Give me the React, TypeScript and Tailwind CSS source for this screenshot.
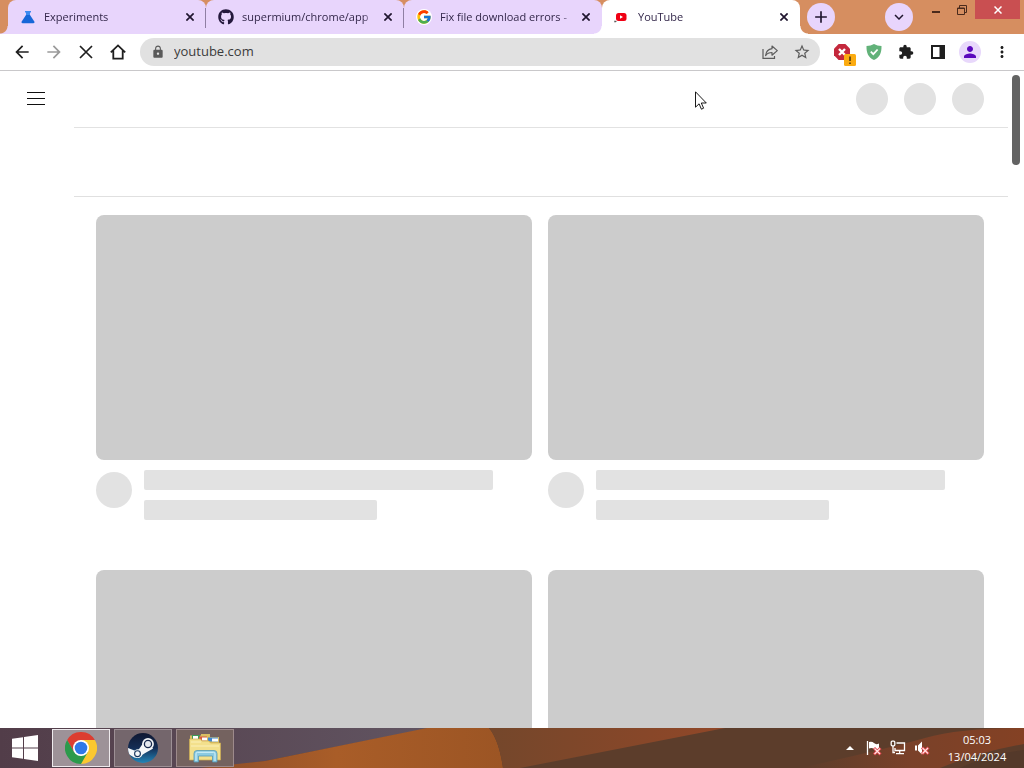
import type { ReactNode } from "react";
import {
  MdArrowBack,
  MdArrowForward,
  MdExtension,
  MdLock,
  MdMoreVert,
  MdPerson,
  MdStarBorder,
  MdKeyboardArrowDown,
  MdAdd,
} from "react-icons/md";
import { FaGithub } from "react-icons/fa";
import { FcGoogle } from "react-icons/fc";

function FlaskIcon() {
  return (
    <svg viewBox="0 0 16 16" className="size-4">
      <path d="M5 2h6v1.600h-1V6h-4V3.600H5z" fill="#3c8af0" />
      <path d="M6 6h4l4.300 6.600c.5.800 0 1.700-.9 1.700H2.600c-.9 0-1.400-.9-.9-1.700z" fill="#1767d8" />
    </svg>
  );
}

function YouTubeIcon() {
  return (
    <svg viewBox="0 0 16 16" className="size-4">
      <rect x="2" y="4" width="10.500" height="8" rx="2.500" fill="#f00014" />
      <path d="M6 6.300v3.400L9 8z" fill="#fff" />
      <path d="M1 11.500v2M.5 12.500h2" stroke="#444" strokeWidth=".8" />
    </svg>
  );
}

type TabProps = { icon: ReactNode; title: string; active?: boolean; divider?: boolean };

function Tab({ icon, title, active, divider }: TabProps) {
  return (
    <div
      className={
        active
          ? "relative flex h-full min-w-0 max-w-[198px] flex-1 items-center rounded-t-lg bg-white pr-2 pl-3"
          : "relative flex h-full min-w-0 max-w-[198px] flex-1 items-center rounded-t-lg bg-[#e8d5fc] pr-2 pl-3"
      }
    >
      {active && (
        <>
          <span className="absolute bottom-0 -left-2 size-2 bg-[radial-gradient(circle_at_0_0,transparent_7px,#fff_8px)]" />
          <span className="absolute -right-2 bottom-0 size-2 bg-[radial-gradient(circle_at_100%_0,transparent_7px,#fff_8px)]" />
        </>
      )}
      <span className="flex size-4 shrink-0 items-center justify-center">{icon}</span>
      <span className="ml-2 min-w-0 flex-1 overflow-hidden text-[11px] whitespace-nowrap text-[#33274a] [mask-image:linear-gradient(to_right,#000_90%,transparent)]">
        {title}
      </span>
      <button aria-label={`Close ${title}`} className="ml-1 flex size-4 items-center justify-center text-[#20162f]">
        <svg viewBox="0 0 8 8" className="size-2" stroke="currentColor" strokeWidth="1.700">
          <path d="M.4.400l7.200 7.200M7.600.400L.4 7.600" />
        </svg>
      </button>
      {divider && <span className="absolute top-2 right-0 h-5 w-px bg-[#8f7fa3]" />}
    </div>
  );
}

function TabStrip() {
  return (
    <header className="relative flex h-[34px] shrink-0 bg-[#d68e60] pl-2">
      <span className="absolute bottom-0 left-0 size-2 bg-[radial-gradient(circle_at_0_0,transparent_7px,#e8d5fc_8px)]" />
      <div className="flex min-w-0 flex-1">
        <Tab icon={<FlaskIcon />} title="Experiments" divider />
        <Tab icon={<FaGithub className="size-4 text-[#24183c]" />} title="supermium/chrome/app" divider />
        <Tab
          icon={
            <span className="flex size-4 items-center justify-center rounded-full bg-white">
              <FcGoogle className="size-4" />
            </span>
          }
          title="Fix file download errors -"
        />
        <Tab icon={<YouTubeIcon />} title="YouTube" active />
        <button
          aria-label="New tab"
          className="mt-[3px] ml-[7px] flex size-7 shrink-0 items-center justify-center rounded-full bg-[#e8d5fc] text-[#20162f]"
        >
          <MdAdd className="size-5" />
        </button>
      </div>
      <button
        aria-label="Search tabs"
        className="mt-[3px] flex size-7 shrink-0 items-center justify-center rounded-full bg-[#e8d5fc] text-[#20162f]"
      >
        <MdKeyboardArrowDown className="size-[18px]" />
      </button>
      <div className="flex h-[19px] shrink-0 pr-1 pl-[10px]">
        <button aria-label="Minimise" className="flex w-[26px] items-end justify-center pb-[6px]">
          <span className="h-[2px] w-2 bg-[#4a2a1c]" />
        </button>
        <button aria-label="Restore" className="flex w-[26px] items-center justify-center">
          <svg viewBox="0 0 10 10" className="size-[10px]" fill="none" stroke="#4a2a1c">
            <path d="M.5 3h7v6.500h-7zM.5 3.500h7M2.500 3V.5h7v7h-2" />
          </svg>
        </button>
        <button aria-label="Close" className="flex w-[45px] items-center justify-center bg-[#c94f51]">
          <svg viewBox="0 0 8 8" className="size-2" stroke="#fff" strokeWidth="1.500">
            <path d="M.5.500l7 7M7.500.500l-7 7" />
          </svg>
        </button>
      </div>
    </header>
  );
}

function Toolbar() {
  const iconButton = "flex size-8 shrink-0 items-center justify-center text-[#1f1f1f]";
  return (
    <div className="flex h-[37px] shrink-0 items-center border-b border-[#c9c8ca] bg-white pr-[6px] pl-[6px]">
      <button aria-label="Back" className={iconButton}>
        <MdArrowBack className="size-5" />
      </button>
      <button aria-label="Forward" className={iconButton}>
        <MdArrowForward className="size-5 text-[#9a9a9a]" />
      </button>
      <button aria-label="Stop loading" className={iconButton}>
        <svg viewBox="0 0 14 14" className="size-[14px]" stroke="currentColor" strokeWidth="1.700">
          <path d="M1 1l12 12M13 1L1 13" />
        </svg>
      </button>
      <button aria-label="Home" className={iconButton}>
        <svg viewBox="0 0 16 16" className="size-4" fill="none" stroke="currentColor" strokeWidth="1.800">
          <path d="M.8 8.300L8 1.400l7.200 6.900M3.300 6.500v8.200h9.400V6.500" />
        </svg>
      </button>
      <div className="mr-[6px] ml-[6px] flex h-7 min-w-0 flex-1 items-center rounded-full bg-[#e1e1e1] pr-[2px] pl-[11px]">
        <MdLock className="size-[14px] shrink-0 text-[#5a5a5a]" />
        <input
          aria-label="Address and search bar"
          defaultValue="youtube.com"
          className="ml-[9px] min-w-0 flex-1 bg-transparent text-[13px] text-[#3b3b3b] outline-none"
        />
        <button aria-label="Share this page" className={iconButton}>
          <svg viewBox="0 0 16 16" className="size-4" fill="none" stroke="#5c5c5c" strokeWidth="1.200">
            <path d="M1 5v9.400h11.500V12" />
            <path d="M10 2l5.300 4.600L10 11.200V8.500C7 8.500 5 9.500 3.600 11.600 4 8 6 5.200 10 4.700z" strokeLinejoin="round" />
          </svg>
        </button>
        <button aria-label="Bookmark this tab" className={iconButton}>
          <MdStarBorder className="size-[18px] text-[#5c5c5c]" />
        </button>
      </div>
      <button aria-label="Content blocker" className={iconButton}>
        <svg viewBox="0 0 24 24" className="size-6 overflow-visible">
          <path d="M8.600 4h6.800L20 8.700v6.600L15.400 20H8.600L4 15.300V8.700z" fill="#c4283c" />
          <path d="M9 9l6 6M15 9l-6 6" stroke="#fff" strokeWidth="2.400" />
          <rect x="14" y="14" width="12" height="12" rx="1.500" fill="#fbab10" />
          <path d="M20 16.500v4.500M20 22.500v1.500" stroke="#3b2a08" strokeWidth="1.400" />
        </svg>
      </button>
      <button aria-label="Protection" className={iconButton}>
        <svg viewBox="0 0 16 16" className="size-4">
          <path d="M8 0c2.200 1.300 4.600 1.900 7.500 1.900C15.700 8.600 13.700 13.500 8 16 2.300 13.500.3 8.600.5 1.900 3.400 1.900 5.800 1.300 8 0z" fill="#62b279" />
          <path d="M4.800 7.600l2.500 2.500 4.300-4.600" fill="none" stroke="#fff" strokeWidth="1.800" />
        </svg>
      </button>
      <button aria-label="Extensions" className={iconButton}>
        <MdExtension className="size-4" />
      </button>
      <button aria-label="Side panel" className={iconButton}>
        <svg viewBox="0 0 14 14" className="size-[14px]">
          <path d="M0 0h14v14H0zM2 2v10h6.500V2z" fill="#1f1f1f" fillRule="evenodd" />
        </svg>
      </button>
      <button aria-label="Profile" className={iconButton}>
        <span className="flex size-[22px] items-center justify-center rounded-full bg-[#e8d8fb]">
          <MdPerson className="size-[18px] text-[#5a08bd]" />
        </span>
      </button>
      <button aria-label="Menu" className={iconButton}>
        <MdMoreVert className="size-[18px]" />
      </button>
    </div>
  );
}

function SkeletonCard() {
  return (
    <article className="mb-[50px]">
      <div className="aspect-video rounded-lg bg-[#cccccc]" />
      <div className="mt-[10px] flex gap-3">
        <div className="mt-[2px] size-9 shrink-0 rounded-full bg-[#e2e2e2]" />
        <div className="flex flex-1 flex-col gap-[10px]">
          <div className="h-5 w-[90%] rounded-xs bg-[#e2e2e2]" />
          <div className="h-5 w-3/5 rounded-xs bg-[#e2e2e2]" />
        </div>
      </div>
    </article>
  );
}

function Page() {
  return (
    <main className="flex min-h-0 flex-1 overflow-hidden bg-white">
      <div className="flex w-[74px] shrink-0 items-start pt-[21px] pl-[27px]">
        <button aria-label="Guide">
          <svg viewBox="0 0 18 13" className="h-[13px] w-[18px]" stroke="#0f0f0f">
            <path d="M0 .5h18M0 6.500h18M0 12.500h18" />
          </svg>
        </button>
      </div>
      <div className="min-w-0 flex-1">
        <div className="flex h-[57px] items-center justify-end gap-4 border-b border-[#e2e2e2] pr-6">
          <span className="size-8 rounded-full bg-[#e2e2e2]" />
          <span className="size-8 rounded-full bg-[#e2e2e2]" />
          <span className="size-8 rounded-full bg-[#e2e2e2]" />
        </div>
        <div className="h-[69px] border-b border-[#e0e0e0]" />
        <div className="grid grid-cols-2 gap-x-4 pt-[18px] pr-6 pl-[22px]">
          <SkeletonCard />
          <SkeletonCard />
          <SkeletonCard />
          <SkeletonCard />
        </div>
      </div>
      <div className="flex w-4 shrink-0 justify-center pt-1">
        <span className="h-[90px] w-2 rounded-full bg-[#636363]" />
      </div>
    </main>
  );
}

function ChromeLogo() {
  return (
    <svg viewBox="0 0 32 32" className="size-8">
      <path d="M16 16L29.860 8A16 16 0 0 1 16 32z" fill="#fbc830" />
      <path d="M16 8h13.860L23 20z" fill="#fbc830" />
      <path d="M16 8h13.860A16 16 0 0 0 2.140 8L9 20z" fill="#dc3d31" />
      <path d="M9 20l7 4 6.900-4L16 32A16 16 0 0 1 2.140 8z" fill="#2b9a4b" />
      <circle cx="16" cy="16" r="8" fill="#fff" />
      <circle cx="16" cy="16" r="6.300" fill="#2f78e8" />
    </svg>
  );
}

function SteamLogo() {
  return (
    <svg viewBox="0 0 32 32" className="size-8">
      <defs>
        <linearGradient id="steam" x1="0" y1="0" x2="0" y2="1">
          <stop offset="0" stopColor="#101832" />
          <stop offset=".5" stopColor="#142d55" />
          <stop offset="1" stopColor="#2286b8" />
        </linearGradient>
        <clipPath id="steam-disc">
          <circle cx="16" cy="16" r="15" />
        </clipPath>
      </defs>
      <circle cx="16" cy="16" r="15" fill="url(#steam)" />
      <g clipPath="url(#steam-disc)">
        <path d="M0 15.500l8 3.200 3-.2 4.200-6 .5 -1.500 10.500 5.500-8 4.500-4 2.500-3 2.500-4-.500L0 21z" fill="#f4f6f8" />
      </g>
      <circle cx="11" cy="21.700" r="4.400" fill="#f4f6f8" />
      <circle cx="10.500" cy="21.700" r="2.900" fill="none" stroke="#16345c" strokeWidth="1.100" />
      <circle cx="21" cy="12" r="5.900" fill="#f4f6f8" />
      <circle cx="21" cy="12" r="3.600" fill="#e5e9ef" stroke="#17294d" strokeWidth="1.300" />
    </svg>
  );
}

function ExplorerLogo() {
  return (
    <svg viewBox="0 0 34 32" className="h-8 w-[34px]">
      <path d="M2 6V3.500h11V2h9v3h9v22H2z" fill="#d9bf62" />
      <path d="M4 3h8v4H4z" fill="#3f9b58" />
      <path d="M11 4.500h8v4h-8z" fill="#d65b3f" />
      <path d="M20 5.500h10v4H20z" fill="#4087d0" />
      <path d="M5 4h5v3H5zM14 5.500h5v3h-5zM24 6.500h6v3h-6z" fill="#fff" />
      <path d="M1.500 7h11l1.500 2h7l1.500 2h10v17h-31z" fill="#f3e08c" stroke="#cfae50" strokeWidth=".7" />
      <path d="M3 10h10M3 14h28" stroke="#fbf0b8" />
      <path d="M6 30v-8.500q0-3 3-3h17q3 0 3 3V30h-4.500v-6h-14v6z" fill="#8ccbe2" stroke="#5799b5" strokeWidth=".8" />
      <path d="M8 29v-7.200q0-1.500 1.500-1.500h16q1.500 0 1.500 1.500V29" fill="none" stroke="#d5f2fb" />
    </svg>
  );
}

function Taskbar() {
  const app = "flex h-[38px] w-[58px] items-center justify-center border";
  return (
    <footer className="relative h-10 shrink-0 overflow-hidden bg-[#5c3d2b]">
      <svg viewBox="0 0 1024 40" preserveAspectRatio="none" className="absolute inset-0 size-full" aria-hidden="true">
        <defs>
          <linearGradient id="sand" x1="0" x2="1">
            <stop offset="0" stopColor="#8c4e2a" />
            <stop offset=".45" stopColor="#a95d28" />
            <stop offset="1" stopColor="#9c5524" />
          </linearGradient>
          <linearGradient id="ridge" x1="0" x2="1">
            <stop offset="0" stopColor="#74472b" />
            <stop offset="1" stopColor="#914728" />
          </linearGradient>
          <linearGradient id="dusk" x1="0" x2="1">
            <stop offset="0" stopColor="#523d49" />
            <stop offset="1" stopColor="#615461" />
          </linearGradient>
          <linearGradient id="glow" x1="0" x2="1">
            <stop offset="0" stopColor="#5c3d2b" />
            <stop offset=".5" stopColor="#7a4129" />
            <stop offset="1" stopColor="#844124" />
          </linearGradient>
        </defs>
        <path d="M0 0h1024v40H0z" fill="#5c3d2b" />
        <path d="M0 0h430L265 33 210 40H0z" fill="url(#dusk)" />
        <path d="M427 0h62q10 12 14 40H200l65-7z" fill="url(#sand)" />
        <path d="M489 0h236L520 40h-17Q499 12 489 0z" fill="url(#ridge)" />
        <path d="M800 40Q890 20 925 10t99-10v16q-45 8-84 24z" fill="url(#glow)" />
        <path d="M960 40q30-14 64-18v18z" fill="#54392a" />
      </svg>
      <div className="relative flex h-full items-center">
        <button aria-label="Start" className="flex w-[52px] shrink-0 items-center justify-center pr-[2px]">
          <svg viewBox="0 0 26 26" className="size-[26px]" fill="#fff">
            <path d="M0 3.700l11-1.500v10.200H0zM12 2l14-2v12.400H12zM0 13.500h11v10.200L0 22.200zM12 13.500h14V26l-14-2z" />
          </svg>
        </button>
        <div className="flex shrink-0 gap-1">
          <button aria-label="Google Chrome" className={`${app} border-[#eeeaed] bg-[#9d9298]`}>
            <ChromeLogo />
          </button>
          <button aria-label="Steam" className={`${app} border-[#9d9095] bg-[#74666c]`}>
            <SteamLogo />
          </button>
          <button aria-label="File Explorer" className={`${app} border-[#9d8a8b] bg-[#74625f]`}>
            <ExplorerLogo />
          </button>
        </div>
        <div className="ml-auto flex shrink-0 items-center gap-2">
          <button aria-label="Show hidden icons" className="flex size-4 items-center justify-center">
            <svg viewBox="0 0 8 4" className="h-1 w-2" fill="#fff">
              <path d="M4 0l4 4H0z" />
            </svg>
          </button>
          <button aria-label="Action centre">
            <svg viewBox="0 0 16 16" className="size-4">
              <path d="M1.500 1v14" stroke="#fff" strokeWidth="1.300" />
              <path d="M3 2q3-1 5 1t5 .500v6q-3 1-5-.5t-5-.5z" fill="#fff" />
              <path d="M8 8l6.500 6.500M14.500 8L8 14.500" stroke="#e0454b" strokeWidth="3" />
              <path d="M8.500 8.500l5.500 5.500M14 8.500L8.500 14" stroke="#ffe3e3" strokeWidth="1.200" />
            </svg>
          </button>
          <button aria-label="Network">
            <svg viewBox="0 0 16 16" className="size-4" fill="none" stroke="#fff" strokeWidth="1.300">
              <path d="M6.500 3h8v7.500H5V8M9.700 10.500V13M6 13.600h8M3 6v6.500h2" />
              <rect x="1.200" y="1.200" width="3.600" height="4.600" rx="1" />
            </svg>
          </button>
          <button aria-label="Volume muted">
            <svg viewBox="0 0 16 16" className="size-4">
              <path d="M1 5.500h2v5H1zM4 5.500L8 1.500v13l-4-4z" fill="#fff" />
              <path d="M8 7.500l6.500 6.500M14.500 7.500L8 14" stroke="#e0454b" strokeWidth="3" />
              <path d="M8.500 8l5.500 5.500M14 8l-5.500 5.500" stroke="#ffe3e3" strokeWidth="1.200" />
            </svg>
          </button>
          <div className="w-[76px] pl-[2px] text-center text-[11px] leading-[17px] text-white">
            <time className="block">05:03</time>
            <time className="block">13/04/2024</time>
          </div>
          <span className="w-[2px]" />
        </div>
      </div>
    </footer>
  );
}

export default function App() {
  return (
    <div className="relative flex h-screen flex-col overflow-hidden font-['Open_Sans','Noto_Sans',sans-serif]">
      <TabStrip />
      <Toolbar />
      <Page />
      <Taskbar />
      <svg
        viewBox="0 0 12 19"
        className="pointer-events-none absolute top-[91px] left-[695px] h-[19px] w-3"
        aria-hidden="true"
      >
        <path d="M.5.800v15.400l3.600-3.400 2.300 5.400 2.200-1-2.300-5.200h5z" fill="#fff" stroke="#000" strokeWidth=".9" />
      </svg>
    </div>
  );
}
